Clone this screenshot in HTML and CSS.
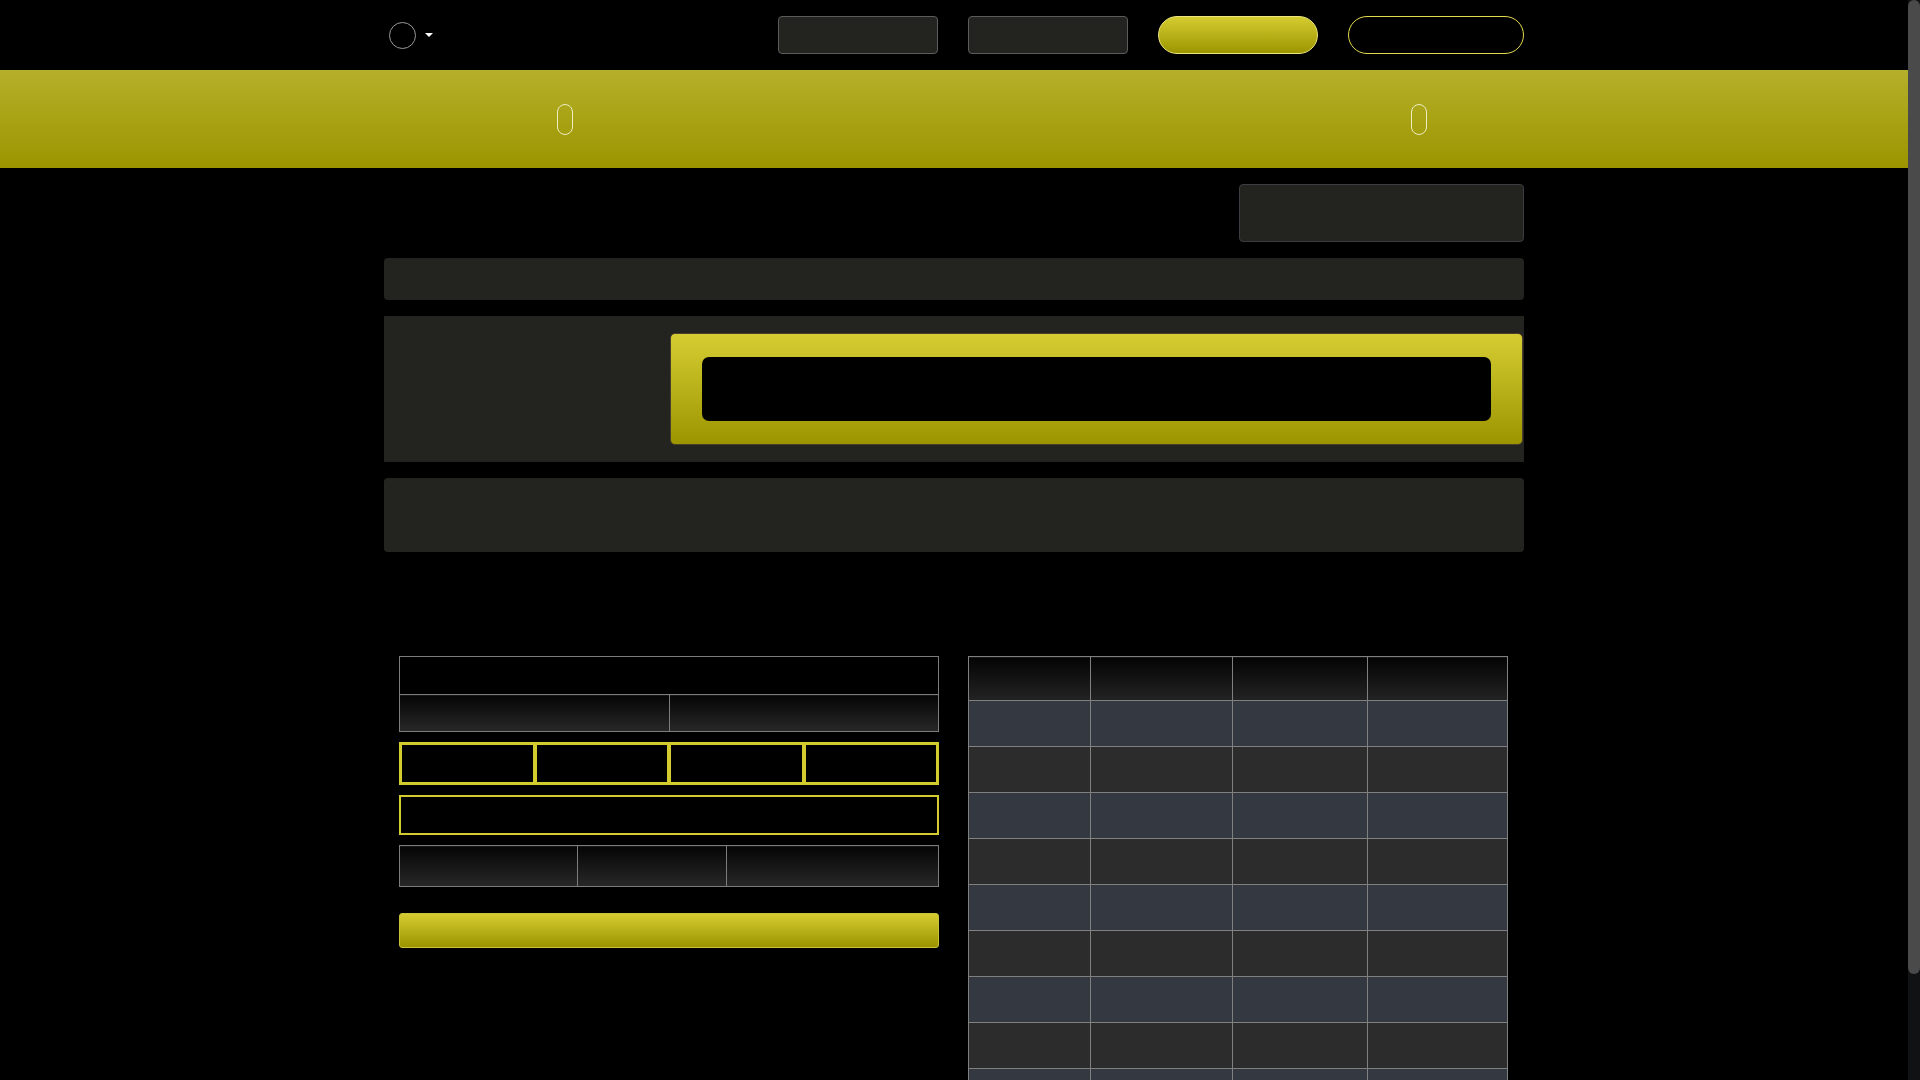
FILE: index.html
```html
<!DOCTYPE html>
<html lang="en">
<head>
	<meta charset="UTF-8">
	<meta name="viewport" content="width=device-width, initial-scale=1.0">
	<title>Document</title>
	<link rel="stylesheet" href="styles.css">
</head>
<body>
	<header class="topbar">
		<div class="container topbar-inner">
			<div class="account">
				<span class="avatar"></span>
				<span class="caret"></span>
			</div>
			<nav class="top-actions">
				<a class="btn-dark" href="#"></a>
				<a class="btn-dark" href="#"></a>
				<a class="btn-gold" href="#"></a>
				<a class="btn-outline" href="#"></a>
			</nav>
		</div>
	</header>

	<div class="band">
		<div class="container band-inner">
			<span class="pill pill-left"></span>
			<span class="pill pill-right"></span>
		</div>
	</div>

	<main class="container">
		<div class="panel panel-small"></div>
		<div class="panel panel-bar"></div>
		<div class="panel panel-feature">
			<div></div>
			<div class="gold-box">
				<div class="gold-inner"></div>
			</div>
		</div>
		<div class="panel panel-wide"></div>

		<div class="row">
			<div class="col">
				<table class="grid-table info-table">
					<tr><td class="head-cell" colspan="2"></td></tr>
					<tr><td></td><td></td></tr>
				</table>

				<div class="gold-cells">
					<div class="gold-cell"></div>
					<div class="gold-cell"></div>
					<div class="gold-cell"></div>
					<div class="gold-cell"></div>
				</div>

				<div class="gold-field"></div>

				<table class="grid-table split-table">
					<tr><td class="c1"></td><td class="c2"></td><td class="c3"></td></tr>
				</table>

				<button class="btn-submit"></button>
			</div>

			<div class="col">
				<table class="list-table">
					<thead>
						<tr><th class="w1"></th><th class="w2"></th><th class="w3"></th><th class="w4"></th></tr>
					</thead>
					<tbody>
						<tr><td></td><td></td><td></td><td></td></tr>
						<tr><td></td><td></td><td></td><td></td></tr>
						<tr><td></td><td></td><td></td><td></td></tr>
						<tr><td></td><td></td><td></td><td></td></tr>
						<tr><td></td><td></td><td></td><td></td></tr>
						<tr><td></td><td></td><td></td><td></td></tr>
						<tr><td></td><td></td><td></td><td></td></tr>
						<tr><td></td><td></td><td></td><td></td></tr>
						<tr><td></td><td></td><td></td><td></td></tr>
						<tr><td></td><td></td><td></td><td></td></tr>
					</tbody>
				</table>
			</div>
		</div>
	</main>

	<div class="scrollbar" aria-hidden="true">
		<div class="scrollbar-thumb"></div>
	</div>
</body>
</html>
```

FILE: styles.css
```css
*{
	box-sizing: border-box;
}
html{
	scrollbar-width: none;
}
body{
	margin: 0;
	padding-right: 12px;
	background: #000;
	font-family: "Liberation Sans", Arial, sans-serif;
	color: #fff;
}
.container{
	width: 1140px;
	margin: 0 auto;
}

/* fake scrollbar drawn over the right edge */
.scrollbar{
	position: fixed;
	top: 0;
	right: 0;
	width: 12px;
	height: 100vh;
	background: #111214;
}
.scrollbar-thumb{
	height: 974px;
	background: #4a4a4a;
	border-radius: 6px;
}

/* top bar */
.topbar{
	height: 70px;
}
.topbar-inner{
	height: 100%;
	display: flex;
	align-items: center;
	justify-content: space-between;
}
.account{
	display: flex;
	align-items: center;
	padding-left: 5px;
}
.avatar{
	width: 27px;
	height: 27px;
	border: 1px solid #9a9a9a;
	border-radius: 50%;
}
.caret{
	margin-left: 9px;
	border-top: 4px solid #fff;
	border-left: 4px solid transparent;
	border-right: 4px solid transparent;
}
.top-actions{
	display: flex;
	gap: 30px;
}
.top-actions a{
	display: block;
	width: 160px;
	height: 38px;
}
.btn-dark{
	background: #23241f;
	border: 1px solid #5c5c5c;
	border-radius: 4px;
}
.btn-gold{
	background: linear-gradient(#d4cc30, #9e9600);
	border: 1px solid #ece67a;
	border-radius: 19px;
}
.top-actions .btn-outline{
	width: 176px;
	border: 1px solid #e2da4c;
	border-radius: 19px;
}

/* yellow band */
.band{
	height: 98px;
	background: linear-gradient(#b5b02a, #9c9500);
}
.band-inner{
	height: 100%;
	display: flex;
	align-items: center;
}
.pill{
	width: 16px;
	height: 31px;
	border: 1.5px solid #efedc2;
	border-radius: 8px;
}
.pill-left{
	margin-left: 173px;
}
.pill-right{
	margin-left: 838px;
}

/* panels */
.panel{
	background: #23241f;
	border-radius: 4px;
	margin-top: 16px;
}
.panel-small{
	width: 285px;
	height: 58px;
	margin-left: auto;
	border: 1px solid #3b3c41;
}
.panel-bar{
	height: 42px;
}
.panel-feature{
	height: 146px;
	border-radius: 0;
	display: grid;
	grid-template-columns: 286px 1fr;
	padding: 17px 1px 17px 0;
}
.gold-box{
	background: linear-gradient(#d5cd32, #9d9500);
	border: 1px solid #4a3f2c;
	border-radius: 5px;
	padding: 23px 31px 23px 31px;
}
.gold-inner{
	height: 64px;
	background: #000;
	border-radius: 7px;
}
.panel-wide{
	height: 74px;
}

/* lower section */
.row{
	display: flex;
	margin-top: 104px;
	padding-bottom: 36px;
}
.col{
	width: 50%;
	padding: 0 15px;
}
.grid-table{
	width: 100%;
	border-collapse: collapse;
	border: 1px solid #7c7c7c;
}
.grid-table td{
	border: 1px solid #7c7c7c;
	height: 37px;
	padding: 0;
	background: linear-gradient(#050505, #282828);
}
.info-table .head-cell{
	height: 38px;
	background: #000;
}
.info-table td{
	width: 50%;
}
.gold-cells{
	margin-top: 10px;
	height: 43px;
	display: grid;
	grid-template-columns: repeat(4, 1fr);
	gap: 4px;
	padding: 3px;
	background: #d4cc2e;
}
.gold-cell{
	background: #000;
}
.gold-field{
	margin-top: 10px;
	height: 40px;
	border: 2px solid #d4cc2e;
}
.split-table{
	margin-top: 10px;
}
.split-table td{
	height: 41px;
}
.split-table .c1{
	width: 178px;
}
.split-table .c2{
	width: 149px;
}
.btn-submit{
	display: block;
	width: 100%;
	height: 35px;
	margin-top: 26px;
	border: 1px solid #c9c23a;
	border-radius: 3px;
	background: linear-gradient(#d4cc30, #9c9400);
}

/* right list table */
.list-table{
	width: 540px;
	border-collapse: collapse;
	margin-left: -1px;
}
.list-table th, .list-table td{
	border: 1px solid #808080;
	padding: 0;
}
.list-table th{
	height: 44px;
	background: linear-gradient(#040404, #232323);
}
.list-table td{
	height: 46px;
	background: #2c2c2c;
}
.list-table tbody tr:nth-child(odd) td{
	background: #343840;
}
.w1{ width: 122px; }
.w2{ width: 142px; }
.w3{ width: 136px; }
.w4{ width: 140px; }
```
